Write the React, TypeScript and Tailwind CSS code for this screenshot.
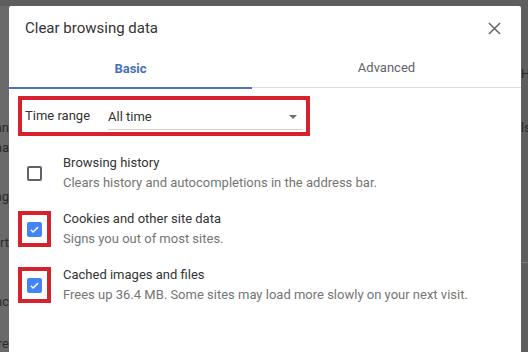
import React from "react";

function Check({ checked }: { checked: boolean }) {
  if (checked) {
    return (
      <div className="w-[15px] h-[15px] rounded-[2px] bg-[#4285f4] flex items-center justify-center">
        <svg width="11" height="11" viewBox="0 0 24 24">
          <path d="M4 12.5l5 5L20 6.5" fill="none" stroke="#ffffff" strokeWidth="3.2" />
        </svg>
      </div>
    );
  }
  return <div className="w-[15px] h-[15px] rounded-[2px] border-2 border-[#5f6368]" />;
}

function Row({ checked, red, title, sub }: { checked: boolean; red: boolean; title: string; sub: string }) {
  return (
    <div className="h-[56px] flex items-center">
      <div
        className={
          red
            ? "w-[33px] h-[36px] border-4 border-[#d6222d] flex items-center justify-center"
            : "w-[33px] h-[36px] border-4 border-transparent flex items-center justify-center"
        }
      >
        <Check checked={checked} />
      </div>
      <div className="ml-[12px] flex flex-col">
        <div className="text-[13px] leading-[20px] text-[#333333]">{title}</div>
        <div className="text-[13px] leading-[20px] text-[#757575]">{sub}</div>
      </div>
    </div>
  );
}

export default function App() {
  return (
    <div
      className="w-[528px] h-[352px] bg-[#5e5e5e] overflow-hidden flex"
      style={{ fontFamily: "Roboto, 'Noto Sans', sans-serif" }}
    >
      {/* left strip of underlying page */}
      <div className="w-[9px] h-full flex flex-col pt-[6px] overflow-hidden text-[13px] leading-[16px] text-[#2a2a2a]">
        <div className="flex-1 bg-[#6a6a6a] flex flex-col overflow-hidden">
          <div className="mt-[114px] flex justify-end whitespace-nowrap">Mean</div>
          <div className="mt-[4px] flex justify-end whitespace-nowrap">ana</div>
          <div className="mt-[33px] flex justify-end whitespace-nowrap">Mang</div>
          <div className="mt-[30px] flex justify-end whitespace-nowrap">Start</div>
          <div className="mt-[12px] h-px bg-[#4a4a4a]" />
          <div className="mt-[31px] flex justify-end whitespace-nowrap">Sync</div>
          <div className="mt-[26px] flex justify-end whitespace-nowrap">Sre</div>
        </div>
      </div>

      {/* dialog */}
      <div className="w-[512px] h-full pt-[6px]">
        <div className="h-full bg-white rounded-t-[2px] flex flex-col">
          <div className="h-[45px] flex items-center justify-between pl-[16px] pr-[20px]">
            <div className="text-[15px] text-[#333333]">Clear browsing data</div>
            <svg width="13" height="13" viewBox="0 0 14 14">
              <path d="M1 1L13 13M13 1L1 13" stroke="#5f6368" strokeWidth="1.6" />
            </svg>
          </div>
          <div className="h-[37px] flex border-b border-[#dcdcdc]">
            <div className="w-[243px] h-[38px] -mb-px border-b-2 border-[#4a78bb] flex items-center justify-center text-[13px] font-bold text-[#4670b5]">
              Basic
            </div>
            <div className="flex-1 flex items-center justify-center text-[13px] text-[#5f6368] pb-[2px]">
              Advanced
            </div>
          </div>

          <div className="ml-[9px] mt-[8px] w-[292px] h-[40px] border-4 border-[#d6222d] flex items-center">
            <div className="ml-[3px] w-[83px] text-[13px] text-[#333333]">Time range</div>
            <div className="w-[195px] h-[26px] mt-[2px] border-b border-[#d0d0d0] flex items-center justify-between">
              <div className="text-[13px] text-[#333333]">All time</div>
              <svg width="8" height="4" viewBox="0 0 8 4" className="mr-[6px]">
                <path d="M0 0H8L4 4Z" fill="#6e6e6e" />
              </svg>
            </div>
          </div>

          <div className="ml-[9px] mt-[9px] flex flex-col">
            <Row
              checked={false}
              red={false}
              title="Browsing history"
              sub="Clears history and autocompletions in the address bar."
            />
            <Row checked={true} red={true} title="Cookies and other site data" sub="Signs you out of most sites." />
            <Row
              checked={true}
              red={true}
              title="Cached images and files"
              sub="Frees up 36.4 MB. Some sites may load more slowly on your next visit."
            />
          </div>
        </div>
      </div>

      {/* right strip */}
      <div className="flex-1 h-full flex flex-col overflow-hidden text-[13px] leading-[16px] text-[#2a2a2a]">
        <div className="mt-[66px] whitespace-nowrap">Hi</div>
        <div className="mt-[38px] whitespace-nowrap">ls</div>
        <div className="mt-[126px] h-px bg-[#7a7a7a]" />
      </div>
    </div>
  );
}
